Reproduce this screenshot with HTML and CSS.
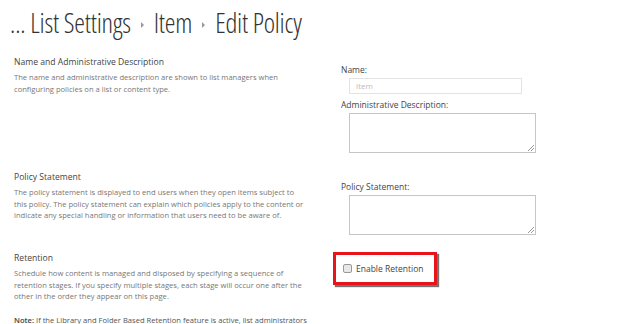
FILE: index.html
```html
<!DOCTYPE html>
<html>
<head>
<meta charset="utf-8">
<link rel="stylesheet" href="styles.css">
</head>
<body>
<div class="page">
  <h1 class="crumbs">
    <span>... List Settings</span>
    <span class="sep"></span>
    <span>Item</span>
    <span class="sep"></span>
    <span>Edit Policy</span>
  </h1>

  <section class="row row-name">
    <div class="info">
      <h2>Name and Administrative Description</h2>
      <p>The name and administrative description are shown to list managers when configuring policies on a list or content type.</p>
    </div>
    <div class="fields fields-name">
      <label class="lbl">Name:</label>
      <div class="input">Item</div>
      <label class="lbl">Administrative Description:</label>
      <div class="textarea"><span class="grip"></span></div>
    </div>
  </section>

  <section class="row row-policy">
    <div class="info">
      <h2>Policy Statement</h2>
      <p>The policy statement is displayed to end users when they open items subject to this policy. The policy statement can explain which policies apply to the content or indicate any special handling or information that users need to be aware of.</p>
    </div>
    <div class="fields fields-policy">
      <label class="lbl">Policy Statement:</label>
      <div class="textarea"><span class="grip"></span></div>
    </div>
  </section>

  <section class="row row-ret">
    <div class="info">
      <h2>Retention</h2>
      <p>Schedule how content is managed and disposed by specifying a sequence of retention stages. If you specify multiple stages, each stage will occur one after the other in the order they appear on this page.</p>
      <p class="note"><b>Note:</b> If the Library and Folder Based Retention feature is active, list administrators</p>
    </div>
    <div class="fields fields-ret">
      <div class="highlight">
        <span class="check"></span>
        <span class="check-label">Enable Retention</span>
      </div>
    </div>
  </section>
</div>
</body>
</html>
```
FILE: styles.css
```css
* { box-sizing: border-box; }
html, body { margin: 0; padding: 0; background: #fff; }
body {
  width: 624px;
  height: 324px;
  overflow: hidden;
  font-family: "Open Sans", "Noto Sans", sans-serif;
  color: #444;
}
.crumbs {
  margin: 0;
  padding: 2px 0 0 10px;
  font-family: "Open Sans", sans-serif;
  font-weight: 300;
  font-stretch: 76%;
  font-size: 27px;
  line-height: 36px;
  color: #333;
  display: flex;
  align-items: center;
  gap: 7px;
  height: 44px;
  letter-spacing: -0.2px;
  white-space: nowrap;
}
.crumbs .sep {
  width: 0; height: 0;
  border-left: 3px solid #999;
  border-top: 3px solid transparent;
  border-bottom: 3px solid transparent;
  margin: 4px 3px 0 3px;
}
.row {
  display: flex;
}
.info {
  width: 319px;
  padding: 0 14px 0 14px;
}
.info h2 {
  margin: 0;
  font-size: 8.6px;
  font-weight: 400;
  color: #444;
  line-height: 12px;
}
.info p {
  margin: 4px 0 0 0;
  font-size: 7.6px;
  line-height: 11.5px;
  color: #777;
}
.info p.note { margin-top: 12px; color: #555; white-space: nowrap; }
.info p.note b { font-weight: 600; color: #444; }
.fields {
  padding-left: 22px;
  display: flex;
  flex-direction: column;
  align-items: flex-start;
}
.lbl {
  font-size: 8.5px;
  line-height: 12px;
  color: #444;
}
.input {
  margin: 2px 0 0 8px;
  width: 173px;
  height: 16px;
  border: 1px solid #e3e3e3;
  font-size: 8px;
  line-height: 14px;
  color: #bbb;
  padding-left: 6px;
}
.textarea {
  position: relative;
  margin: 2px 0 0 8px;
  width: 187px;
  height: 40px;
  border: 1px solid #c6c6c6;
}
.grip {
  position: absolute;
  right: 1px; bottom: 1px;
  width: 6px; height: 6px;
  background: linear-gradient(135deg, transparent 45%, #999 45%, #999 55%, transparent 55%, transparent 72%, #999 72%, #999 82%, transparent 82%);
}
.row-name { margin-top: 12px; height: 115px; }
.fields-name { padding-top: 8px; }
.fields-name .input + .lbl { margin-top: 5px; }
.row-policy { height: 81px; }
.fields-policy { padding-top: 10px; }
.fields-ret { padding-left: 14px; }
.highlight {
  width: 104px;
  height: 33px;
  border: 3px solid #e8141b;
  box-shadow: 2px 2px 1px rgba(0,0,0,0.55);
  display: flex;
  align-items: center;
  padding-left: 7px;
  gap: 4px;
}
.check {
  width: 9px; height: 9px;
  border: 1px solid #999;
  border-radius: 2px;
  background: #e8e8e8;
}
.check-label { font-size: 8.5px; color: #444; }
```
